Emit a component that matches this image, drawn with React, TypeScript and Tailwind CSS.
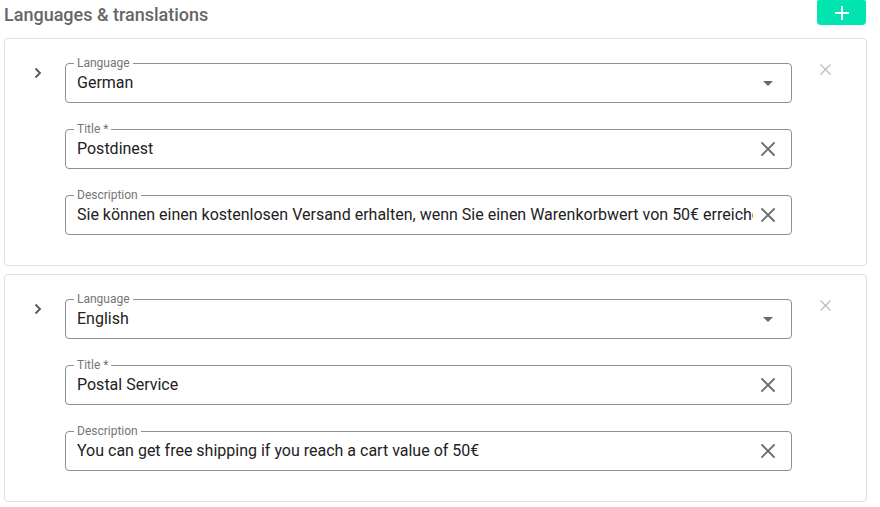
import React from 'react';

type Entry = {
  language: string;
  title: string;
  description: string;
};

const entries: Entry[] = [
  {
    language: 'German',
    title: 'Postdinest',
    description:
      'Sie können einen kostenlosen Versand erhalten, wenn Sie einen Warenkorbwert von 50€ erreichen',
  },
  {
    language: 'English',
    title: 'Postal Service',
    description: 'You can get free shipping if you reach a cart value of 50€',
  },
];

function ClearIcon() {
  return (
    <svg width="14" height="14" viewBox="0 0 14 14" className="shrink-0">
      <path d="M1 1L13 13M13 1L1 13" stroke="#6b6b6b" strokeWidth="1.8" strokeLinecap="square" />
    </svg>
  );
}

function Field({
  label,
  value,
  select,
}: {
  label: string;
  value: string;
  select?: boolean;
}) {
  return (
    <div className="relative h-[40px] rounded-[4px] border border-[#8f8f8f] flex items-center pl-[11px] pr-[16px]">
      <span className="absolute -top-[8px] left-[8px] px-[3px] bg-white text-[12px] leading-[14px] text-[#757575]">
        {label}
      </span>
      <div className="flex-1 min-w-0 overflow-hidden whitespace-nowrap text-[16px] leading-[20px] text-[#222]">
        {value}
      </div>
      {select ? (
        <svg width="10" height="5" viewBox="0 0 10 5" className="shrink-0 ml-[8px] mr-[2px]">
          <path d="M0 0H10L5 5Z" fill="#6b6b6b" />
        </svg>
      ) : (
        <div className="ml-[8px] shrink-0">
          <ClearIcon />
        </div>
      )}
    </div>
  );
}

function TranslationCard({ entry }: { entry: Entry }) {
  return (
    <div className="flex rounded-[4px] border border-[#e0e0e0] bg-white pt-[24px] pb-[30px]">
      <div className="w-[60px] shrink-0 flex justify-center pl-[6px] pt-[4px]">
        <svg width="8" height="12" viewBox="0 0 8 12">
          <path d="M1.5 1.5L6 6L1.5 10.5" stroke="#555" strokeWidth="1.8" fill="none" />
        </svg>
      </div>
      <div className="flex-1 min-w-0 flex flex-col gap-[26px]">
        <Field label="Language" value={entry.language} select />
        <Field label="Title *" value={entry.title} />
        <Field label="Description" value={entry.description} />
      </div>
      <div className="w-[74px] shrink-0 flex pt-[1px] pl-[28px]">
        <svg width="11" height="11" viewBox="0 0 11 11">
          <path d="M0.5 0.5L10.5 10.5M10.5 0.5L0.5 10.5" stroke="#bdbdbd" strokeWidth="1.3" />
        </svg>
      </div>
    </div>
  );
}

export default function App() {
  return (
    <div
      className="w-[880px] h-[507px] bg-white pl-[4px] pr-[13px] overflow-hidden"
      style={{ fontFamily: 'Roboto, "Noto Sans", sans-serif' }}
    >
      <div className="flex items-start justify-between h-[25px]">
        <h2 className="text-[18px] leading-[24px] font-medium text-[#666] pt-[3px]">
          Languages &amp; translations
        </h2>
        <button className="w-[49px] h-[25px] rounded-b-[4px] rounded-t-[2px] bg-[#00e5b0] flex items-center justify-center mr-[1px]">
          <svg width="14" height="14" viewBox="0 0 14 14">
            <path d="M7 0V14M0 7H14" stroke="white" strokeWidth="2" />
          </svg>
        </button>
      </div>
      <div className="mt-[13px] flex flex-col gap-[8px]">
        {entries.map((e) => (
          <TranslationCard key={e.language} entry={e} />
        ))}
      </div>
    </div>
  );
}
